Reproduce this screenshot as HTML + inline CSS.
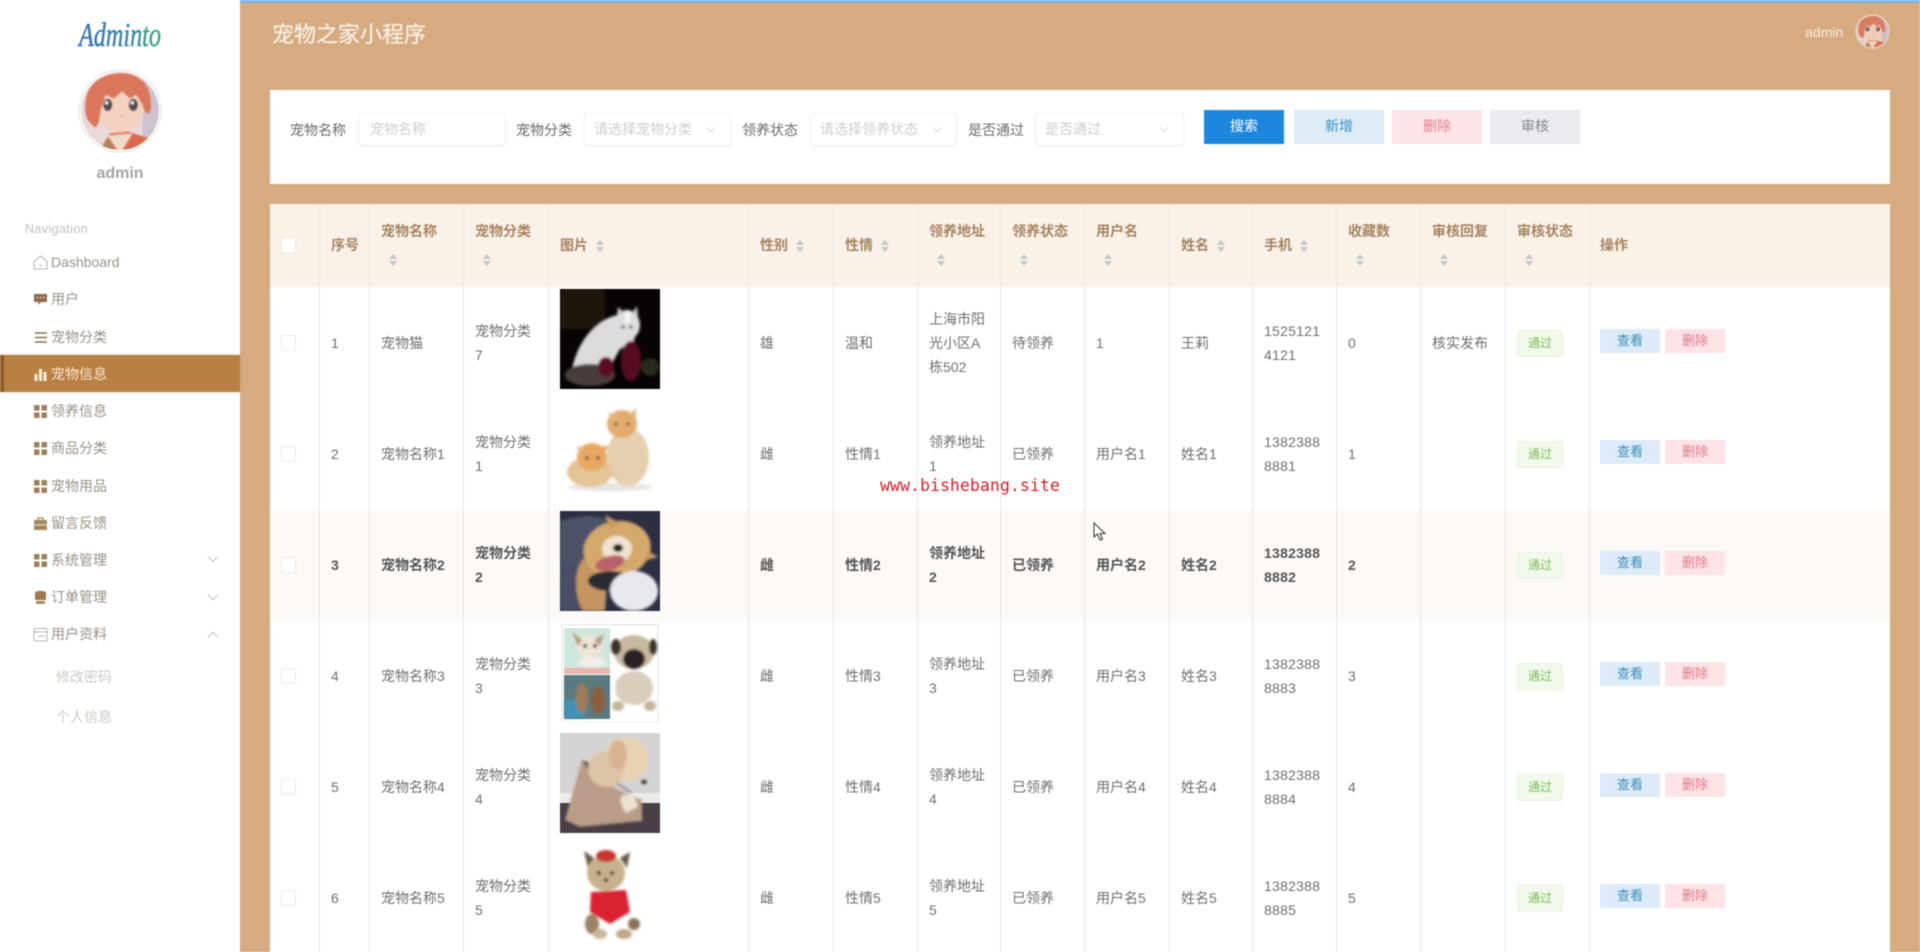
<!DOCTYPE html>
<html lang="zh">
<head>
<meta charset="utf-8">
<title>宠物之家小程序</title>
<style>
html,body{margin:0;padding:0;width:1920px;height:952px;overflow:hidden;background:#fff}
#root{position:relative;width:1920px;height:952px;overflow:hidden;background:#d6ab80;filter:blur(.45px);font-family:"Liberation Sans","Noto Sans CJK SC",sans-serif;font-size:14px;color:#666}
.abs{position:absolute}
#topbar{left:0;top:0;width:1920px;height:3px;background:#7cb0e6}
#side{left:0;top:0;width:240px;height:952px;background:#fff}
.nav{position:absolute;left:51px;height:20px;line-height:20px;color:#9a9184;white-space:nowrap}
.ico{position:absolute;left:33px;width:15px;height:15px}
.sub{position:absolute;left:56px;color:#cdc9c3;line-height:20px}
.chev{position:absolute;left:206px;width:14px;height:8px}
#active{left:0;top:355px;width:240px;height:37px;background:#b98044;box-shadow:0 0 3px rgba(185,128,68,.4)}
#active i{position:absolute;left:0;top:0;width:4px;height:37px;background:#8e5c24}
#card{left:270px;top:90px;width:1620px;height:94px;background:#fff}
.lab{position:absolute;top:120px;line-height:20px;color:#6e6a66}
.inp{position:absolute;top:113px;height:31px;background:#fff;border:1px solid #f2f0ee;border-radius:3px;box-shadow:0 1px 2px rgba(0,0,0,.04);line-height:31px;padding-left:11px;color:#d0ceca;box-sizing:content-box;white-space:nowrap}
.sel{padding-left:9px}
.inp svg{position:absolute;right:12px;top:12px}
.btn{position:absolute;top:110px;height:34px;line-height:33px;text-align:center;font-size:14px}
table{position:absolute;left:270px;top:204px;width:1620px;table-layout:fixed;border-collapse:separate;border-spacing:0;background:#fff}
th{height:82px;padding:0 0 0 11px;background:#faf1e9;border-right:1px solid #f1e7dc;border-bottom:2px solid #fbf7f3;text-align:left;color:#a68560;font-weight:bold;font-size:14px;line-height:28px;white-space:nowrap;box-sizing:content-box}
td{height:111px;padding:0 0 2px 11px;border-right:1px solid #e4e4e4;line-height:24px;white-space:nowrap;vertical-align:middle;color:#6f6f6f;box-sizing:border-box}
th:first-child,td:first-child{padding-left:10px}
td:nth-child(12){letter-spacing:.25px}
th:last-child,td:last-child{border-right:0;padding-left:10px}
td.pic{vertical-align:top;padding:1px 0 0 11px}
td.pic svg{display:block}
tr.hov td{background:#fdf9f6;font-weight:bold;color:#555}
tr.hov td.act,tr.hov td.tg{font-weight:normal}
.caret{display:inline-block;vertical-align:middle;width:24px;height:14px}
.cb{display:block;width:13px;height:14px;border:1px solid #ebebeb;background:#fff;margin-left:1px}
th .cb{border-color:#f3ebe2;width:13px}
.tag{display:inline-block;position:relative;top:1px;width:44px;height:25px;line-height:25px;background:#f2f9ec;border:1px solid #e9f3e1;color:#79bd5a;font-size:12px;text-align:center;font-weight:normal}
.b1,.b2{display:inline-block;width:60px;height:24px;line-height:24px;text-align:center;font-size:13px;position:relative;top:-2px;font-weight:normal;vertical-align:middle}
.b1{background:#dcebf7;color:#3c8cb8}
.b2{background:#fde3e6;color:#e2788a;margin-left:5px}
#wm{left:880px;top:475px;font-family:"DejaVu Sans Mono","Liberation Mono",monospace;font-size:16.6px;line-height:22px;color:#d8202c;white-space:nowrap}
</style>
</head>
<body>
<div id="root">
<svg width="0" height="0" style="position:absolute">
<defs>
<linearGradient id="lg" x1="0" x2="1" y1="0" y2="0"><stop offset="0" stop-color="#3b72b8"/><stop offset=".65" stop-color="#3f8ea8"/><stop offset="1" stop-color="#3fae82"/></linearGradient>
<filter id="s" x="-20%" y="-20%" width="140%" height="140%"><feGaussianBlur stdDeviation="1.3"/></filter>
<filter id="a"><feGaussianBlur stdDeviation=".7"/></filter>
<clipPath id="cc"><circle cx="42" cy="42" r="38"/></clipPath>
<symbol id="ava" viewBox="0 0 84 84">
<g clip-path="url(#cc)"><rect width="84" height="84" fill="#ead9d8"/><rect x="64" width="20" height="84" fill="#cfc2d0"/><g filter="url(#a)">
<path d="M20 84 L32 64 L50 62 L74 70 L72 84Z" fill="#dc6a50"/><path d="M30 66 L42 84 L54 64Z" fill="#f0dcc6"/><path d="M30 68 L38 84 L24 84Z" fill="#a08a5c"/>
<ellipse cx="43" cy="42" rx="22" ry="21" fill="#f4d2c2"/>
<path d="M8 38 C8 14 26 5 44 5 C62 5 74 18 72 40 C70 48 66 44 64 36 L58 26 L52 30 L44 23 L36 30 L28 26 L24 38 C22 46 22 56 18 58 C11 54 7 46 8 38Z" fill="#da765c"/>
<ellipse cx="30" cy="36" rx="4.5" ry="6" fill="#5a4650"/><ellipse cx="55" cy="36" rx="4.5" ry="6" fill="#5a4650"/><circle cx="29" cy="34" r="1.6" fill="#fff"/><circle cx="54" cy="34" r="1.6" fill="#fff"/>
<path d="M43 47 l2 0" stroke="#b87a70" stroke-width="1"/></g></g>
<circle cx="42" cy="42" r="40" fill="none" stroke="#f3eeec" stroke-width="2"/>
</symbol>
<symbol id="g" viewBox="0 0 15 15"><rect x="1" y="1" width="5.5" height="5.5" fill="#9b8060"/><rect x="8.5" y="1" width="5.5" height="5.5" fill="#9b8060"/><rect x="1" y="8.5" width="5.5" height="5.5" fill="#ab7a5a"/><rect x="8.5" y="8.5" width="5.5" height="5.5" fill="#9b8060"/></symbol>
<symbol id="ct" viewBox="0 0 24 14"><path d="M12 1 L16 6 L8 6Z" fill="#c6c6c6"/><path d="M8 8 L16 8 L12 13Z" fill="#c6c6c6"/></symbol>
<symbol id="dn" viewBox="0 0 14 8"><path d="M2 1.5 L7 6.5 L12 1.5" fill="none" stroke="#c8c8cc" stroke-width="1.2"/></symbol>
<symbol id="dns" viewBox="0 0 14 8"><path d="M3 1.5 L7 5.5 L11 1.5" fill="none" stroke="#dcdcdc" stroke-width="1.1"/></symbol>
</defs>
</svg>

<div class="abs" id="topbar"></div>

<div class="abs" id="side">
<svg class="abs" style="left:76px;top:16px" width="90" height="36"><text x="3" y="30" font-family="Liberation Serif,serif" font-style="italic" font-size="34" textLength="82" lengthAdjust="spacingAndGlyphs" fill="url(#lg)" stroke="url(#lg)" stroke-width=".6">Adminto</text></svg>
<svg class="abs" style="left:77px;top:68px" width="86" height="86"><use href="#ava" width="86" height="86"/></svg>
<div class="abs" style="left:0;width:240px;top:164px;text-align:center;font-size:16px;font-weight:bold;color:#a3a6ab;line-height:20px">admin</div>
<div class="abs" style="left:25px;top:221px;font-size:12.5px;color:#bfbfc0;line-height:16px;letter-spacing:.4px">Navigation</div>

<div class="abs" id="active"><i></i></div>

<svg class="ico" style="top:255px" viewBox="0 0 15 15"><path d="M1 6.5 L7.5 1 L14 6.5 L14 14 L1 14Z M6 10.5 H9" fill="none" stroke="#b4b4b0" stroke-width="1"/></svg>
<div class="nav" style="top:252px">Dashboard</div>
<svg class="ico" style="top:292px" viewBox="0 0 15 15"><path d="M1 2 H14 V10 H8 L5.5 13 V10 H1Z" fill="#8f6a4c"/><path d="M3.5 5.5 h2 M6.8 5.5 h2 M10 5.5 h2" stroke="#e8dccb" stroke-width="1"/></svg>
<div class="nav" style="top:289px">用户</div>
<svg class="ico" style="top:330px" viewBox="0 0 15 15"><path d="M2 3 H14 M2 7.5 H14 M2 12 H14" stroke="#857450" stroke-width="1.6"/></svg>
<div class="nav" style="top:327px">宠物分类</div>
<svg class="ico" style="top:367px" viewBox="0 0 15 15"><rect x="1.5" y="7" width="3" height="7" fill="#fbeedd"/><rect x="6" y="2" width="3" height="12" fill="#fbeedd"/><rect x="10.5" y="5" width="3" height="9" fill="#fbeedd"/></svg>
<div class="nav" style="top:364px;color:#fbe8cf">宠物信息</div>
<svg class="ico" style="top:404px"><use href="#g" width="15" height="15"/></svg>
<div class="nav" style="top:401px">领养信息</div>
<svg class="ico" style="top:441px"><use href="#g" width="15" height="15"/></svg>
<div class="nav" style="top:438px">商品分类</div>
<svg class="ico" style="top:479px"><use href="#g" width="15" height="15"/></svg>
<div class="nav" style="top:476px">宠物用品</div>
<svg class="ico" style="top:516px" viewBox="0 0 15 15"><path d="M5 4 V2 H10 V4" fill="none" stroke="#a08a5c" stroke-width="1.3"/><rect x="1" y="4" width="13" height="4.5" fill="#a08a5c"/><rect x="1" y="9.3" width="13" height="4.7" fill="#a08a5c"/></svg>
<div class="nav" style="top:513px">留言反馈</div>
<svg class="ico" style="top:553px"><use href="#g" width="15" height="15"/></svg>
<div class="nav" style="top:550px">系统管理</div>
<svg class="chev" style="top:555px"><use href="#dn" width="14" height="8"/></svg>
<svg class="ico" style="top:590px" viewBox="0 0 15 15"><path d="M2 2 Q7.5 -0.5 13 2 L13 10 H2Z" fill="#9c7a4c"/><rect x="3" y="11" width="9" height="3" rx="1" fill="#a58a5c"/></svg>
<div class="nav" style="top:587px">订单管理</div>
<svg class="chev" style="top:593px"><use href="#dn" width="14" height="8"/></svg>
<svg class="ico" style="top:627px" viewBox="0 0 15 15"><rect x="1" y="1.5" width="13" height="12.5" rx="1" fill="none" stroke="#b4b4b4" stroke-width="1"/><path d="M1 5 H14 M5 9 H12" stroke="#b4b4b4" stroke-width="1"/></svg>
<div class="nav" style="top:624px">用户资料</div>
<svg class="chev" style="top:631px;transform:scaleY(-1)"><use href="#dn" width="14" height="8"/></svg>
<div class="sub" style="top:667px">修改密码</div>
<div class="sub" style="top:707px">个人信息</div>
</div>

<div class="abs" style="left:272px;top:21px;font-size:22px;line-height:28px;color:#f8eee2;white-space:nowrap;-webkit-text-stroke:.3px #f8eee2">宠物之家小程序</div>
<div class="abs" style="left:1805px;top:22px;font-size:14px;line-height:20px;color:#f8eee0">admin</div>
<svg class="abs" style="left:1855px;top:14px;opacity:.85" width="35" height="35"><use href="#ava" width="35" height="35"/></svg>

<div class="abs" id="card"></div>
<div class="lab" style="left:290px">宠物名称</div>
<div class="inp" style="left:358px;width:135px">宠物名称</div>
<div class="lab" style="left:516px">宠物分类</div>
<div class="inp sel" style="left:584px;width:136px">请选择宠物分类<svg width="14" height="8"><use href="#dns" width="14" height="8"/></svg></div>
<div class="lab" style="left:742px">领养状态</div>
<div class="inp sel" style="left:810px;width:136px">请选择领养状态<svg width="14" height="8"><use href="#dns" width="14" height="8"/></svg></div>
<div class="lab" style="left:968px">是否通过</div>
<div class="inp sel" style="left:1035px;width:138px">是否通过<svg width="14" height="8"><use href="#dns" width="14" height="8"/></svg></div>
<div class="btn" style="left:1204px;width:80px;background:#1c87dd;color:#fff">搜索</div>
<div class="btn" style="left:1294px;width:90px;background:#deecf8;color:#3f8fc6">新增</div>
<div class="btn" style="left:1392px;width:90px;background:#fde4e7;color:#e4808f">删除</div>
<div class="btn" style="left:1490px;width:90px;background:#e9ebee;color:#83878b">审核</div>

<table>
<colgroup><col style="width:50px"><col style="width:50px"><col style="width:94px"><col style="width:85px"><col style="width:200px"><col style="width:85px"><col style="width:84px"><col style="width:83px"><col style="width:84px"><col style="width:85px"><col style="width:83px"><col style="width:84px"><col style="width:84px"><col style="width:85px"><col style="width:84px"><col style="width:300px"></colgroup>
<thead><tr>
<th><span class="cb"></span></th>
<th>序号</th>
<th>宠物名称<br><svg class="caret"><use href="#ct" width="24" height="14"/></svg></th>
<th>宠物分类<br><svg class="caret"><use href="#ct" width="24" height="14"/></svg></th>
<th>图片<svg class="caret"><use href="#ct" width="24" height="14"/></svg></th>
<th>性别<svg class="caret"><use href="#ct" width="24" height="14"/></svg></th>
<th>性情<svg class="caret"><use href="#ct" width="24" height="14"/></svg></th>
<th>领养地址<br><svg class="caret"><use href="#ct" width="24" height="14"/></svg></th>
<th>领养状态<br><svg class="caret"><use href="#ct" width="24" height="14"/></svg></th>
<th>用户名<br><svg class="caret"><use href="#ct" width="24" height="14"/></svg></th>
<th>姓名<svg class="caret"><use href="#ct" width="24" height="14"/></svg></th>
<th>手机<svg class="caret"><use href="#ct" width="24" height="14"/></svg></th>
<th>收藏数<br><svg class="caret"><use href="#ct" width="24" height="14"/></svg></th>
<th>审核回复<br><svg class="caret"><use href="#ct" width="24" height="14"/></svg></th>
<th>审核状态<br><svg class="caret"><use href="#ct" width="24" height="14"/></svg></th>
<th>操作</th>
</tr></thead>
<tbody>
<tr>
<td><span class="cb"></span></td><td>1</td><td>宠物猫</td><td>宠物分类<br>7</td>
<td class="pic"><svg width="100" height="100" viewBox="0 0 100 100"><rect width="100" height="100" fill="#080404"/><rect width="45" height="40" fill="#1a1410" filter="url(#s)"/><g filter="url(#s)"><path d="M12 82 C16 55 35 30 58 26 L78 30 L74 52 L60 60 L50 78 Z" fill="#dcdadb"/><ellipse cx="67" cy="36" rx="13" ry="15" fill="#dedcde"/><path d="M57 26 L58 18 L65 24 M72 24 L77 17 L78 28" fill="#c9c7c7"/><rect x="65" y="22" width="5" height="12" fill="#f8f8f8"/><circle cx="63" cy="38" r="1.7" fill="#4a5a6a"/><circle cx="71" cy="38" r="1.7" fill="#4a5a6a"/><ellipse cx="30" cy="86" rx="25" ry="11" fill="#4a3c3a"/><ellipse cx="46" cy="78" rx="8" ry="10" fill="#5c0f20"/><ellipse cx="71" cy="72" rx="10" ry="20" fill="#571022"/><ellipse cx="90" cy="78" rx="9" ry="9" fill="#272c1f"/></g></svg></td>
<td>雄</td><td>温和</td><td>上海市阳<br>光小区A<br>栋502</td><td>待领养</td><td>1</td><td>王莉</td><td>1525121<br>4121</td><td>0</td><td>核实发布</td><td class="tg"><span class="tag">通过</span></td><td class="act"><span class="b1">查看</span><span class="b2">删除</span></td>
</tr>
<tr>
<td><span class="cb"></span></td><td>2</td><td>宠物名称1</td><td>宠物分类<br>1</td>
<td class="pic"><svg width="100" height="100" viewBox="0 0 100 100"><rect width="100" height="100" fill="#fff"/><g filter="url(#s)"><ellipse cx="50" cy="87" rx="42" ry="4" fill="#e8e4e0"/><ellipse cx="68" cy="57" rx="21" ry="29" fill="#e6cfae"/><ellipse cx="62" cy="24" rx="15" ry="14" fill="#e3ac6e"/><path d="M48 13 L52 22 L58 14Z M70 14 L76 8 L76 20Z" fill="#e3b88a"/><circle cx="56" cy="24" r="1.5" fill="#333"/><circle cx="68" cy="24" r="1.5" fill="#333"/><ellipse cx="30" cy="72" rx="23" ry="15" fill="#e5c497"/><ellipse cx="32" cy="57" rx="15" ry="14" fill="#e9a860"/><path d="M17 46 L24 50 L20 56Z M42 46 L49 46 L44 54Z" fill="#e6b080"/><circle cx="27" cy="58" r="1.7" fill="#333"/><circle cx="38" cy="58" r="1.7" fill="#333"/></g></svg></td>
<td>雌</td><td>性情1</td><td>领养地址<br>1</td><td>已领养</td><td>用户名1</td><td>姓名1</td><td>1382388<br>8881</td><td>1</td><td></td><td class="tg"><span class="tag">通过</span></td><td class="act"><span class="b1">查看</span><span class="b2">删除</span></td>
</tr>
<tr class="hov">
<td><span class="cb"></span></td><td>3</td><td>宠物名称2</td><td>宠物分类<br>2</td>
<td class="pic"><svg width="100" height="100" viewBox="0 0 100 100"><rect width="100" height="100" fill="#2c2f42"/><path d="M0 10 Q30 0 50 10 L30 60 L0 70Z" fill="#4d5167" filter="url(#s)"/><g filter="url(#s)"><path d="M0 50 L20 55 L20 100 L0 100Z" fill="#4a4d66"/><path d="M22 48 Q10 70 22 100 L45 100 L48 60Z" fill="#c59562"/><ellipse cx="57" cy="38" rx="34" ry="28" transform="rotate(-12 57 38)" fill="#d5a86c"/><path d="M45 4 L50 18 L60 12Z M88 40 L98 46 L84 50Z" fill="#c99a60"/><ellipse cx="57" cy="38" rx="15" ry="13" fill="#efe2d0"/><ellipse cx="58" cy="37" rx="5" ry="4" fill="#22201f"/><ellipse cx="50" cy="52" rx="15" ry="7" transform="rotate(-15 50 52)" fill="#b9616a"/><ellipse cx="50" cy="70" rx="22" ry="10" fill="#2c2a30"/><ellipse cx="74" cy="80" rx="24" ry="20" fill="#e9e8ee"/></g></svg></td>
<td>雌</td><td>性情2</td><td>领养地址<br>2</td><td>已领养</td><td>用户名2</td><td>姓名2</td><td>1382388<br>8882</td><td>2</td><td></td><td class="tg"><span class="tag">通过</span></td><td class="act"><span class="b1">查看</span><span class="b2">删除</span></td>
</tr>
<tr>
<td><span class="cb"></span></td><td>4</td><td>宠物名称3</td><td>宠物分类<br>3</td>
<td class="pic"><svg width="100" height="100" viewBox="0 0 100 100"><rect x="2" y="3" width="96" height="97" fill="#fff" stroke="#e0e0e0"/><rect x="4" y="6" width="46" height="46" fill="#cfe6dc"/><rect x="4" y="46" width="46" height="6" fill="#e8b6ac"/><rect x="4" y="53" width="46" height="44" fill="#5a7a80"/><g filter="url(#s)"><rect x="5" y="78" width="20" height="18" fill="#3f93b8"/><ellipse cx="30" cy="24" rx="13" ry="11" fill="#efe6d8"/><path d="M12 10 L22 18 L18 24Z M44 12 L34 18 L40 24Z" fill="#b89a70"/><circle cx="25" cy="24" r="2" fill="#222"/><circle cx="35" cy="24" r="2" fill="#222"/><ellipse cx="32" cy="40" rx="14" ry="5" fill="#f2eeea"/><ellipse cx="22" cy="76" rx="6" ry="15" fill="#a07c58"/><ellipse cx="38" cy="78" rx="7" ry="14" fill="#8a5e3c"/><ellipse cx="74" cy="30" rx="20" ry="17" fill="#c9b8a0"/><ellipse cx="56" cy="25" rx="5" ry="8" fill="#3a3028"/><ellipse cx="93" cy="25" rx="4" ry="8" fill="#3a3028"/><ellipse cx="74" cy="37" rx="11" ry="10" fill="#2a2420"/><ellipse cx="74" cy="66" rx="19" ry="17" fill="#d9cdbb"/><ellipse cx="58" cy="84" rx="6" ry="5" fill="#c6b496"/><ellipse cx="90" cy="84" rx="6" ry="5" fill="#c6b496"/></g></svg></td>
<td>雌</td><td>性情3</td><td>领养地址<br>3</td><td>已领养</td><td>用户名3</td><td>姓名3</td><td>1382388<br>8883</td><td>3</td><td></td><td class="tg"><span class="tag">通过</span></td><td class="act"><span class="b1">查看</span><span class="b2">删除</span></td>
</tr>
<tr>
<td><span class="cb"></span></td><td>5</td><td>宠物名称4</td><td>宠物分类<br>4</td>
<td class="pic"><svg width="100" height="100" viewBox="0 0 100 100"><rect width="100" height="100" fill="#d6d3d5"/><rect y="60" width="100" height="10" fill="#ecebe8"/><rect y="70" width="100" height="30" fill="#483e46"/><g filter="url(#s)"><path d="M22 27 L5 87 L20 94 L82 88 L82 67 L66 60 L40 48Z" fill="#b99d89"/><path d="M22 27 L35 32 L30 40Z" fill="#6a5244"/><ellipse cx="66" cy="26" rx="22" ry="22" fill="#e9d2b2"/><ellipse cx="46" cy="36" rx="18" ry="18" fill="#ddc4a4"/><ellipse cx="58" cy="22" rx="9" ry="15" fill="#d9b292"/><path d="M62 62 L74 62 L78 74 L66 80 Q58 70 62 62Z" fill="#ece1cf"/><ellipse cx="84" cy="49" rx="3" ry="2" fill="#3a2a24"/><path d="M56 50 L72 60" stroke="#3e3a3a" stroke-width="1"/></g></svg></td>
<td>雌</td><td>性情4</td><td>领养地址<br>4</td><td>已领养</td><td>用户名4</td><td>姓名4</td><td>1382388<br>8884</td><td>4</td><td></td><td class="tg"><span class="tag">通过</span></td><td class="act"><span class="b1">查看</span><span class="b2">删除</span></td>
</tr>
<tr>
<td><span class="cb"></span></td><td>6</td><td>宠物名称5</td><td>宠物分类<br>5</td>
<td class="pic"><svg width="100" height="100" viewBox="0 0 100 100"><rect width="100" height="100" fill="#fff"/><g filter="url(#s)"><path d="M24 7 L34 14 L28 24Z M70 8 L60 14 L67 24Z" fill="#6b5a42"/><ellipse cx="46" cy="29" rx="19" ry="18" fill="#c9b08c"/><ellipse cx="46" cy="12" rx="10" ry="6" fill="#c5342e"/><circle cx="39" cy="29" r="2" fill="#2a2420"/><circle cx="52" cy="29" r="2" fill="#2a2420"/><circle cx="46" cy="36" r="2" fill="#2a2420"/><path d="M31 48 L66 46 L70 68 L50 80 L30 68Z" fill="#d92230"/><ellipse cx="32" cy="80" rx="7" ry="10" fill="#9a8266"/><ellipse cx="40" cy="90" rx="7" ry="5" fill="#cdb596"/><ellipse cx="64" cy="90" rx="8" ry="5" fill="#c0a684"/><ellipse cx="74" cy="80" rx="6" ry="6" fill="#8a7258"/></g></svg></td>
<td>雌</td><td>性情5</td><td>领养地址<br>5</td><td>已领养</td><td>用户名5</td><td>姓名5</td><td>1382388<br>8885</td><td>5</td><td></td><td class="tg"><span class="tag">通过</span></td><td class="act"><span class="b1">查看</span><span class="b2">删除</span></td>
</tr>
</tbody>
</table>

<div class="abs" id="wm">www.bishebang.site</div>
<svg class="abs" style="left:1093px;top:522px" width="14" height="20" viewBox="0 0 14 20"><path d="M1 1 L1 15 L4.5 12 L7 18 L9.5 17 L7 11.5 L12 11.5Z" fill="#fff" stroke="#333" stroke-width="1"/></svg>
</div>
</body>
</html>
